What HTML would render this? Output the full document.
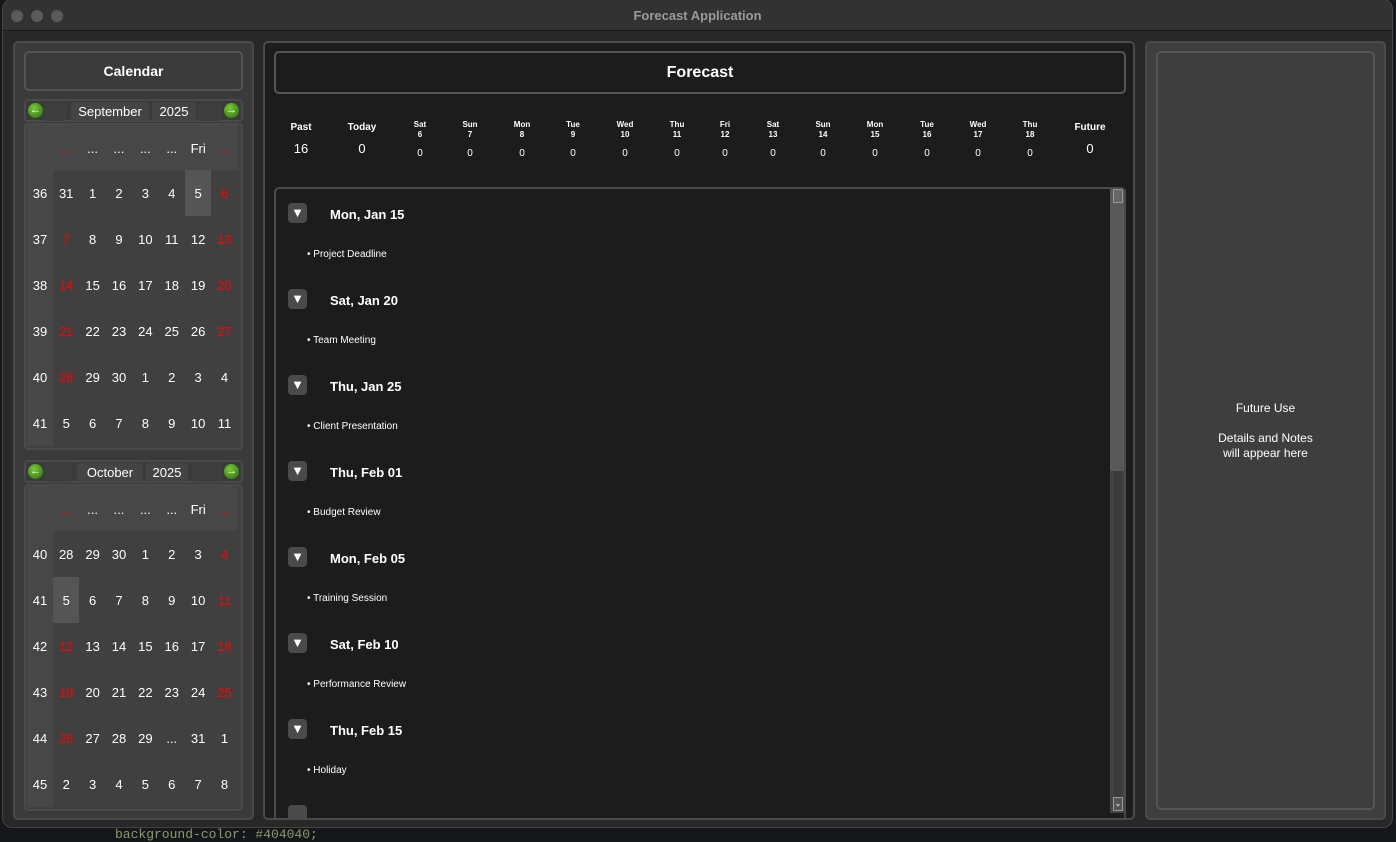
<!DOCTYPE html>
<html><head><style>
*{margin:0;padding:0;box-sizing:border-box}
body{width:1396px;height:837px;background:#15171a;font-family:"Liberation Sans",Arial,sans-serif;color:#fff;position:relative;overflow:hidden}
.code{position:absolute;left:115px;top:827px;font-family:"Liberation Mono",monospace;font-size:13px;color:#8a9a6a}
.win{position:absolute;left:2px;top:-1px;width:1391px;height:829px;background:#282828;border-radius:10px;overflow:hidden;border:1px solid #444}
.title{height:31px;background:#323232;border-bottom:1px solid #1a1a1a;text-align:center;font-size:13px;font-weight:bold;color:#9a9a9a;line-height:32px;position:relative}
.dot{position:absolute;top:10px;width:12px;height:12px;border-radius:50%;background:#5a5a5a}
.abs{position:absolute}
.lp{left:10px;top:41px;width:241px;height:779px;background:#3a3a3a;border:2px solid #4a4a4a;border-radius:5px}
.box{border:2px solid #555;border-radius:5px}
.nav{position:absolute;left:21px;width:219px;height:23px;background:#3a3a3a;border:2px solid #4a4a4a;border-radius:4px}
.arr{position:absolute;top:2px;width:15px;height:15px;border-radius:50%;background:radial-gradient(circle at 40% 35%,#7c3,#2a6a10);color:#fff;font-size:11px;line-height:15px;text-align:center;font-weight:bold}
.sel{position:absolute;top:1px;height:19px;background:#444;border-radius:3px;font-size:13px;line-height:19px;text-align:center}
.grid{position:absolute;left:21px;width:219px;background:#404040;border:2px solid #4a4a4a;border-radius:4px;overflow:hidden}
.grid table{border-collapse:collapse;margin-left:1px}
.grid td{width:26.4px;height:46px;text-align:center;font-size:13px;padding:0}
.grid tr.h td{background:#474747;height:45px;padding-top:1px}
.grid td.wk{background:#474747;width:26px}
.r{color:#f00}
.cur{background:#555}
.mp{left:260px;top:41px;width:872px;height:779px;background:#1c1c1c;border:2px solid #4a4a4a;border-radius:5px;overflow:hidden}
.stat{position:absolute;text-align:center;font-weight:bold;transform:translateX(-50%)}
.list{left:9px;top:144px;width:852px;height:660px;border:2px solid #4a4a4a;border-radius:5px;overflow:hidden}
.tg{position:absolute;left:12px;width:19px;height:20px;background:#4a4a4a;border-radius:4px;font-size:13px;text-align:center;line-height:20px}
.hd{position:absolute;left:54px;font-size:13px;font-weight:bold}
.it{position:absolute;left:31px;font-size:10px}
.rp{left:1142px;top:41px;width:241px;height:779px;background:#3e3e3e;border:2px solid #4a4a4a;border-radius:5px}
</style></head><body>
<div class="code">background-color: #404040;</div>
<div class="win">
<div class="title"><span class="dot" style="left:8px"></span><span class="dot" style="left:28px"></span><span class="dot" style="left:48px"></span>Forecast Application</div>

<div class="abs lp">
 <div class="abs box" style="left:9px;top:8px;width:219px;height:40px;text-align:center;line-height:36px;font-size:14px;font-weight:bold">Calendar</div>
 <div class="nav" style="left:9px;top:56px"><div class="arr" style="left:2px">←</div><div class="sel" style="left:18px;width:22px;background:#3e3e3e"></div><div class="sel" style="left:45px;width:78px">September</div><div class="sel" style="left:126px;width:44px">2025</div><div class="sel" style="left:172px;width:24px;background:#3e3e3e"></div><div class="arr" style="left:198px">→</div></div>
 <div class="grid" style="left:9px;top:80px;height:327px"><table>
 <tr class="h"><td class="wk"></td><td class="r">...</td><td>...</td><td>...</td><td>...</td><td>...</td><td>Fri</td><td class="r">...</td></tr>
 <tr><td class="wk">36</td><td>31</td><td>1</td><td>2</td><td>3</td><td>4</td><td class="cur">5</td><td class="r">6</td></tr>
 <tr><td class="wk">37</td><td class="r">7</td><td>8</td><td>9</td><td>10</td><td>11</td><td>12</td><td class="r">13</td></tr>
 <tr><td class="wk">38</td><td class="r">14</td><td>15</td><td>16</td><td>17</td><td>18</td><td>19</td><td class="r">20</td></tr>
 <tr><td class="wk">39</td><td class="r">21</td><td>22</td><td>23</td><td>24</td><td>25</td><td>26</td><td class="r">27</td></tr>
 <tr><td class="wk">40</td><td class="r">28</td><td>29</td><td>30</td><td>1</td><td>2</td><td>3</td><td>4</td></tr>
 <tr><td class="wk">41</td><td>5</td><td>6</td><td>7</td><td>8</td><td>9</td><td>10</td><td>11</td></tr>
 </table></div>
 <div class="nav" style="left:9px;top:417px"><div class="arr" style="left:2px">←</div><div class="sel" style="left:18px;width:28px;background:#3e3e3e"></div><div class="sel" style="left:51px;width:66px">October</div><div class="sel" style="left:120px;width:42px">2025</div><div class="sel" style="left:166px;width:30px;background:#3e3e3e"></div><div class="arr" style="left:198px">→</div></div>
 <div class="grid" style="left:9px;top:441px;height:327px"><table>
 <tr class="h"><td class="wk"></td><td class="r">...</td><td>...</td><td>...</td><td>...</td><td>...</td><td>Fri</td><td class="r">...</td></tr>
 <tr><td class="wk">40</td><td>28</td><td>29</td><td>30</td><td>1</td><td>2</td><td>3</td><td class="r">4</td></tr>
 <tr><td class="wk">41</td><td class="cur">5</td><td>6</td><td>7</td><td>8</td><td>9</td><td>10</td><td class="r">11</td></tr>
 <tr><td class="wk">42</td><td class="r">12</td><td>13</td><td>14</td><td>15</td><td>16</td><td>17</td><td class="r">18</td></tr>
 <tr><td class="wk">43</td><td class="r">19</td><td>20</td><td>21</td><td>22</td><td>23</td><td>24</td><td class="r">25</td></tr>
 <tr><td class="wk">44</td><td class="r">26</td><td>27</td><td>28</td><td>29</td><td>...</td><td>31</td><td>1</td></tr>
 <tr><td class="wk">45</td><td>2</td><td>3</td><td>4</td><td>5</td><td>6</td><td>7</td><td>8</td></tr>
 </table></div>
</div>

<div class="abs mp">
 <div class="abs box" style="left:9px;top:8px;width:852px;height:43px;text-align:center;line-height:39px;font-size:16px;font-weight:bold">Forecast</div>
 <div class="stat" style="left:36px;top:79px;font-size:10px">Past</div><div class="stat" style="left:36px;top:98px;font-size:13px;font-weight:normal">16</div>
 <div class="stat" style="left:97px;top:79px;font-size:10px">Today</div><div class="stat" style="left:97px;top:98px;font-size:13px;font-weight:normal">0</div>
 <div class="stat" style="left:155px;top:77px;font-size:8px;line-height:10px">Sat<br>6</div><div class="stat" style="left:155px;top:105px;font-size:10px;font-weight:normal">0</div>
 <div class="stat" style="left:205px;top:77px;font-size:8px;line-height:10px">Sun<br>7</div><div class="stat" style="left:205px;top:105px;font-size:10px;font-weight:normal">0</div>
 <div class="stat" style="left:257px;top:77px;font-size:8px;line-height:10px">Mon<br>8</div><div class="stat" style="left:257px;top:105px;font-size:10px;font-weight:normal">0</div>
 <div class="stat" style="left:308px;top:77px;font-size:8px;line-height:10px">Tue<br>9</div><div class="stat" style="left:308px;top:105px;font-size:10px;font-weight:normal">0</div>
 <div class="stat" style="left:360px;top:77px;font-size:8px;line-height:10px">Wed<br>10</div><div class="stat" style="left:360px;top:105px;font-size:10px;font-weight:normal">0</div>
 <div class="stat" style="left:412px;top:77px;font-size:8px;line-height:10px">Thu<br>11</div><div class="stat" style="left:412px;top:105px;font-size:10px;font-weight:normal">0</div>
 <div class="stat" style="left:460px;top:77px;font-size:8px;line-height:10px">Fri<br>12</div><div class="stat" style="left:460px;top:105px;font-size:10px;font-weight:normal">0</div>
 <div class="stat" style="left:508px;top:77px;font-size:8px;line-height:10px">Sat<br>13</div><div class="stat" style="left:508px;top:105px;font-size:10px;font-weight:normal">0</div>
 <div class="stat" style="left:558px;top:77px;font-size:8px;line-height:10px">Sun<br>14</div><div class="stat" style="left:558px;top:105px;font-size:10px;font-weight:normal">0</div>
 <div class="stat" style="left:610px;top:77px;font-size:8px;line-height:10px">Mon<br>15</div><div class="stat" style="left:610px;top:105px;font-size:10px;font-weight:normal">0</div>
 <div class="stat" style="left:662px;top:77px;font-size:8px;line-height:10px">Tue<br>16</div><div class="stat" style="left:662px;top:105px;font-size:10px;font-weight:normal">0</div>
 <div class="stat" style="left:713px;top:77px;font-size:8px;line-height:10px">Wed<br>17</div><div class="stat" style="left:713px;top:105px;font-size:10px;font-weight:normal">0</div>
 <div class="stat" style="left:765px;top:77px;font-size:8px;line-height:10px">Thu<br>18</div><div class="stat" style="left:765px;top:105px;font-size:10px;font-weight:normal">0</div>
 <div class="stat" style="left:825px;top:79px;font-size:10px">Future</div><div class="stat" style="left:825px;top:98px;font-size:13px;font-weight:normal">0</div>
 <div class="abs list">
  <div class="tg" style="top:14px">▼</div><div class="hd" style="top:18px">Mon, Jan 15</div><div class="it" style="top:60px">• Project Deadline</div>
  <div class="tg" style="top:100px">▼</div><div class="hd" style="top:104px">Sat, Jan 20</div><div class="it" style="top:146px">• Team Meeting</div>
  <div class="tg" style="top:186px">▼</div><div class="hd" style="top:190px">Thu, Jan 25</div><div class="it" style="top:232px">• Client Presentation</div>
  <div class="tg" style="top:272px">▼</div><div class="hd" style="top:276px">Thu, Feb 01</div><div class="it" style="top:318px">• Budget Review</div>
  <div class="tg" style="top:358px">▼</div><div class="hd" style="top:362px">Mon, Feb 05</div><div class="it" style="top:404px">• Training Session</div>
  <div class="tg" style="top:444px">▼</div><div class="hd" style="top:448px">Sat, Feb 10</div><div class="it" style="top:490px">• Performance Review</div>
  <div class="tg" style="top:530px">▼</div><div class="hd" style="top:534px">Thu, Feb 15</div><div class="it" style="top:576px">• Holiday</div>
  <div class="tg" style="top:616px"></div>
  <div class="abs" style="left:834px;top:0;width:14px;height:624px;background:#444"></div>
  <div class="abs" style="left:834px;top:0;width:14px;height:282px;background:#595959"></div>
  <div class="abs" style="left:838px;top:282px;width:8px;height:330px;background:#3a3a3a"></div>
  <div class="abs" style="left:837px;top:0;width:10px;height:14px;background:#666;border:1px solid #999"></div>
  <div class="abs" style="left:837px;top:608px;width:10px;height:14px;background:#555;border:1px solid #999;font-size:8px;line-height:12px;text-align:center">⌄</div>
 </div>
</div>

<div class="abs rp">
 <div class="abs box" style="left:9px;top:8px;width:219px;height:759px;text-align:center;font-size:12px">
  <div style="position:absolute;top:348px;width:100%">Future Use</div>
  <div style="position:absolute;top:378px;width:100%;line-height:15px">Details and Notes<br>will appear here</div>
 </div>
</div>
</div>
</body></html>
